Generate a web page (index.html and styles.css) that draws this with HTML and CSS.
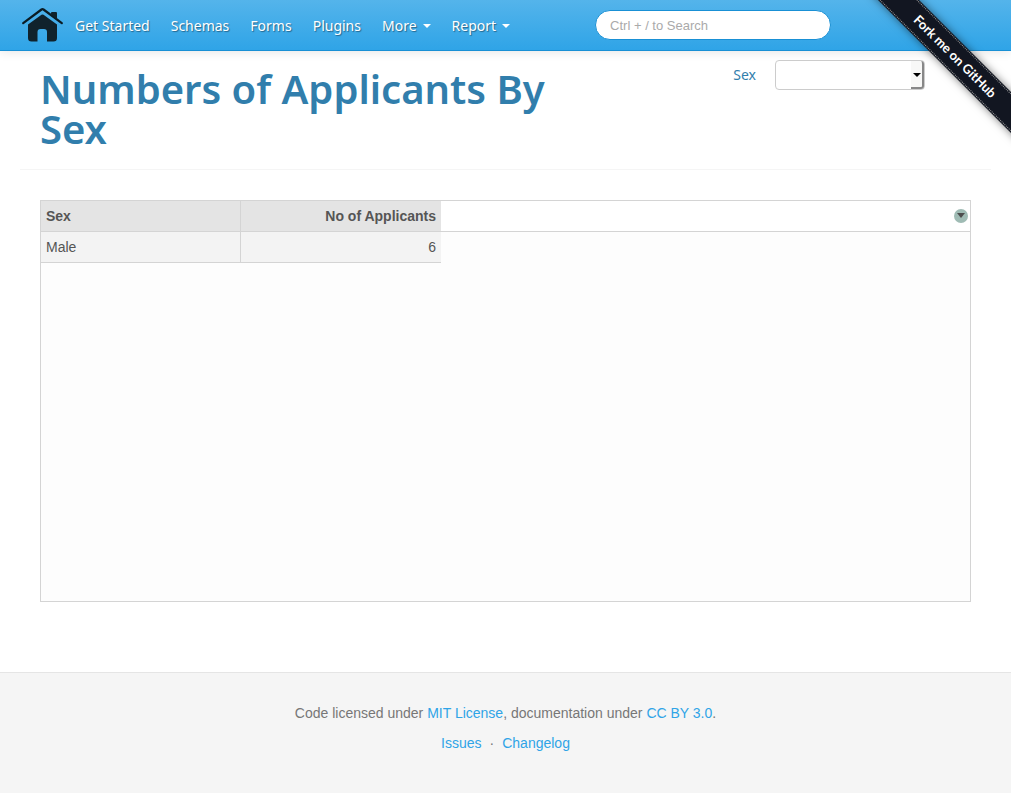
FILE: index.html
```html
<!DOCTYPE html>
<html lang="en">
<head>
<meta charset="utf-8">
<meta name="viewport" content="width=device-width, initial-scale=1">
<title>Numbers of Applicants By Sex</title>
<link rel="stylesheet" href="styles.css">
</head>
<body>
<header class="navbar">
  <a class="brand" href="#" aria-label="Home">
    <svg class="brand-icon" viewBox="0 0 41 34" width="41" height="34" aria-hidden="true">
      <path d="M1.200 15.200 19.500 1.500q1-.7 2 0L39.800 15.200" fill="none" stroke="#0b1c24" stroke-width="2.200" stroke-linecap="round"/>
      <path d="M29 6V5q0-1 1-1h4q1 0 1 1v6.500z" fill="#10222c"/>
      <path d="M19.500 6.800q1-.6 2 0L35 16.500V30q0 3.500-3.500 3.500H25V24q0-3-3-3h-3.500q-3 0-3 3v9.500h-6Q6 33.500 6 30V16.500z" fill="#10222c"/>
    </svg>
  </a>
  <nav class="menu">
    <a class="menu-link" href="#">Get Started</a>
    <a class="menu-link" href="#">Schemas</a>
    <a class="menu-link" href="#">Forms</a>
    <a class="menu-link" href="#">Plugins</a>
    <button class="menu-link" type="button">More<span class="caret"></span></button>
    <button class="menu-link" type="button">Report<span class="caret"></span></button>
  </nav>
  <form class="search">
    <input class="search-input" type="text" placeholder="Ctrl + / to Search" aria-label="Search">
  </form>
</header>
<div class="ribbon-corner"><a class="ribbon" href="#">Fork me on GitHub</a></div>
<main class="content">
  <div class="page-header">
    <h1 class="title">Numbers of Applicants By Sex</h1>
    <div class="filter">
      <label class="filter-label" for="sex">Sex</label>
      <div class="select-box">
        <select class="filter-select" id="sex"><option></option></select>
        <span class="select-arrow"></span>
      </div>
    </div>
  </div>
  <section class="grid">
    <button class="grid-menu" type="button" aria-label="Column menu"><span class="grid-menu-arrow"></span></button>
    <table class="grid-table">
      <thead><tr><th class="cell" scope="col">Sex</th><th class="cell cell-number" scope="col">No of Applicants</th></tr></thead>
      <tbody><tr><td class="cell">Male</td><td class="cell cell-number">6</td></tr></tbody>
    </table>
  </section>
</main>
<footer class="footer">
  <p class="footer-line">Code licensed under <a class="link" href="#">MIT License</a>, documentation under <a class="link" href="#">CC BY 3.0</a>.</p>
  <ul class="footer-links">
    <li><a class="link" href="#">Issues</a></li>
    <li class="dot">·</li>
    <li><a class="link" href="#">Changelog</a></li>
  </ul>
</footer>
</body>
</html>
```
FILE: styles.css
```css
* { box-sizing: border-box; }

body {
  margin: 0;
  min-height: 100vh;
  display: flex;
  flex-direction: column;
  background: #fff;
  color: #555;
  font: 14px/20px "Liberation Sans", Arial, sans-serif;
}

.navbar {
  height: 51px;
  flex: none;
  display: flex;
  align-items: center;
  padding: 0 20px;
  background: linear-gradient(#54b4eb, #2fa4e7);
  border-bottom: 1px solid #1990d5;
  box-shadow: 0 1px 10px rgba(0, 0, 0, .1);
}

.brand { display: flex; padding: 0 2px; }
.brand-icon { display: block; }

.menu { display: flex; gap: 1px; }

.menu-link {
  display: flex;
  align-items: center;
  padding: 16px 10px 14px;
  border: 0;
  background: none;
  color: #fff;
  font: 14px/20px "Noto Sans", sans-serif;
  text-decoration: none;
  text-shadow: 1px 1px 1px rgba(0, 0, 0, .4);
}

.caret {
  margin-left: 6px;
  border: 4px solid transparent;
  border-top-color: #fff;
  border-bottom: 0;
}

.search { margin-left: 75px; }

.search-input {
  display: block;
  width: 236px;
  height: 30px;
  padding: 4px 14px;
  border: 1px solid #1990d5;
  border-radius: 15px;
  background: #fff;
  color: #555;
  font: 13px/20px "Liberation Sans", Arial, sans-serif;
}

.search-input::placeholder { color: #aaa; }

.ribbon-corner {
  position: absolute;
  top: 0;
  right: 0;
  width: 150px;
  height: 150px;
  overflow: hidden;
  pointer-events: none;
}

.ribbon {
  position: absolute;
  top: 42px;
  right: -49px;
  width: 210px;
  height: 29px;
  background: #121621;
  box-shadow: 0 0 8px rgba(0, 0, 0, .5);
  outline: 1px dotted #999;
  outline-offset: -2px;
  color: #fff;
  font: bold 13px/29px Lato, sans-serif;
  text-align: center;
  text-decoration: none;
  transform: rotate(45deg);
  pointer-events: auto;
}

.content { padding: 0 20px; }

.page-header {
  display: flex;
  align-items: flex-start;
  justify-content: space-between;
  padding: 18px 66px 20px 20px;
  border-bottom: 1px solid #f5f5f5;
}

.title {
  flex: 0 1 540px;
  margin: 0;
  color: #317eac;
  font: 600 40px/40px "Noto Sans", sans-serif;
}

.filter { display: flex; gap: 19px; margin-top: -9px; }

.filter-label {
  color: #317eac;
  font: 14px/30px "Noto Sans", sans-serif;
}

.select-box { position: relative; }

.filter-select {
  appearance: none;
  display: block;
  width: 150px;
  height: 30px;
  border: 1px solid #ccc;
  border-radius: 4px;
  background: #fff;
}

.select-arrow {
  position: absolute;
  top: 1px;
  right: 1px;
  width: 13px;
  height: 28px;
  border-right: 2px solid #888;
  border-bottom: 2px solid #888;
  border-radius: 0 3px 3px 0;
  background: #f8f8f7;
  pointer-events: none;
}

.select-arrow::after {
  content: "";
  position: absolute;
  top: 12px;
  right: 1px;
  border: 4px solid transparent;
  border-top-color: #000;
  border-bottom: 0;
}

.grid {
  position: relative;
  margin: 30px 20px 0;
  min-height: 402px;
  border: 1px solid #d4d4d4;
  background: linear-gradient(#fff 30px, #d4d4d4 30px, #d4d4d4 31px, #fdfdfd 31px);
}

.grid-table {
  table-layout: fixed;
  width: 400px;
  border-collapse: separate;
  border-spacing: 0;
}

.cell {
  padding: 5px;
  border-bottom: 1px solid #d4d4d4;
  border-right: 1px solid #d4d4d4;
  background: #f3f3f3;
  text-align: left;
}

th.cell { background: #e4e4e4; }
.cell-number { border-right: 0; text-align: right; }

.grid-menu {
  position: absolute;
  top: 8px;
  right: 2px;
  display: flex;
  align-items: center;
  justify-content: center;
  width: 14px;
  height: 14px;
  padding: 0 0 2px;
  border: 0;
  border-radius: 50%;
  background: #9fbbb4;
}

.grid-menu-arrow {
  border: 4px solid transparent;
  border-top: 5px solid #4d4d4d;
  border-bottom: 0;
}

.footer {
  flex: 1 0 auto;
  margin-top: 70px;
  padding: 30px 20px;
  border-top: 1px solid #e5e5e5;
  background: #f5f5f5;
  color: #777;
  text-align: center;
}

.footer-line { margin: 0 0 10px; }

.footer-links {
  display: flex;
  justify-content: center;
  gap: 8px;
  margin: 0;
  padding: 0;
  list-style: none;
}

.link { color: #2fa4e7; text-decoration: none; }
```
